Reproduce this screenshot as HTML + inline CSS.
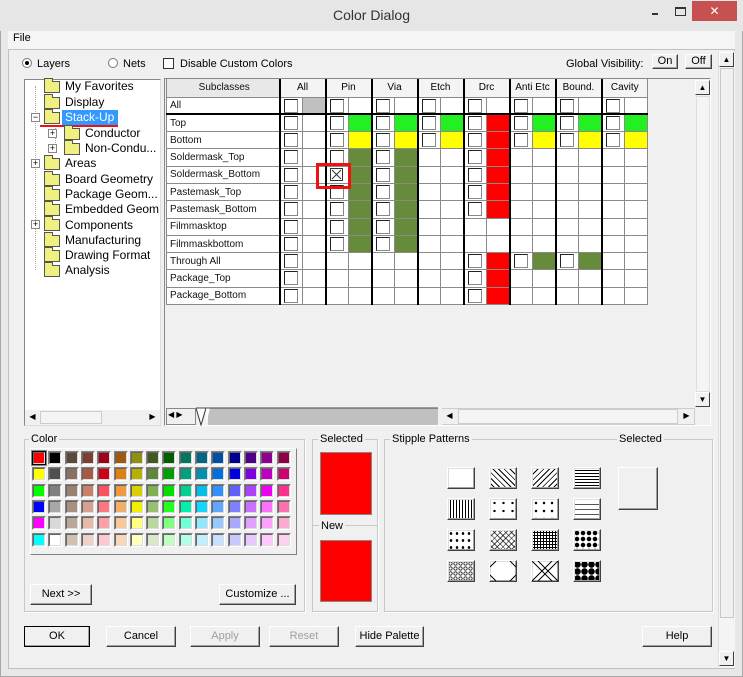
<!DOCTYPE html>
<html><head><meta charset="utf-8"><style>
*{box-sizing:border-box;margin:0;padding:0}
body{width:743px;height:677px;background:#f0f0f0;font-family:"Liberation Sans",sans-serif;font-size:11px;color:#000;position:relative;overflow:hidden}
.a{position:absolute}
.btn{position:absolute;background:#f0f0f0;border:1px solid;border-color:#fff #404040 #404040 #fff;box-shadow:inset -1px -1px 0 #a0a0a0;text-align:center;font-size:11px}
.grp{position:absolute;border:1px solid #c8c8c8;box-shadow:1px 1px 0 #fff}
.lbl{position:absolute;background:#f0f0f0;padding:0 2px;top:-7px;font-size:11px;line-height:12px}
table{border-collapse:collapse;position:absolute;left:166px;top:79px;table-layout:fixed;background:#fff}
td{border:1px solid #8a8a8a;height:17.3px;width:23px;padding:0;position:relative;font-size:10px}
td.n{width:113px;padding-left:3px;color:#111}
tr.h td{background:#f4f4f4;text-align:center;height:18px;font-size:10px;border-top:none}
tr.h td.n{background:#e8e8e8}
td.c::after{content:"";position:absolute;left:3px;top:1px;width:12px;height:12px;border:1px solid #222;border-right-color:#888;border-bottom-color:#888;background:#fff}
td.g{background:#22f022}td.y{background:#ffff00}td.o{background:#668b3a}td.r{background:#ff0000}td.q{background:#c0c0c0}
.k{border-left:2px solid #000!important}
tr.t td{border-bottom:2px solid #000}
.sw{position:absolute;width:14px;height:14px;border:1px solid;border-color:#808080 #fff #fff #808080}
.sw i{display:block;width:12px;height:12px;border:1px solid #666;border-right-color:#ddd;border-bottom-color:#ddd}
.tr{position:absolute;font-size:12px;line-height:14px;white-space:nowrap}
.fd{position:absolute;width:16px;height:12px;background:#f0f080;border:1px solid #555}
.fd::before{content:"";position:absolute;left:-1px;top:-4px;width:7px;height:3px;background:#f0f080;border:1px solid #555;border-bottom:none}
.pl{position:absolute;width:9px;height:9px;border:1px solid #888;background:#fff;font-size:9px;line-height:7px;text-align:center}
.st{position:absolute;width:28px;height:22px;background:#fff;border:1px solid;border-color:#fff #404040 #404040 #fff;box-shadow:inset -1px -1px 0 #a0a0a0,inset 1px 1px 0 #ddd}
.ar{position:absolute;width:15px;height:15px;background:#f0f0f0;border:1px solid;border-color:#fff #404040 #404040 #fff;font-size:8px;text-align:center;line-height:13px}
</style></head><body>
<div class="a" style="left:0;top:0;width:743px;height:677px;border:1px solid #a8a8a8;background:#e8e8e8"></div>
<div class="a" style="left:0;top:0;width:743px;height:31px;background:#e6e6e6"></div>
<div class="a" style="left:0;top:7px;width:743px;text-align:center;font-size:14px;color:#333">Color Dialog</div>
<div class="a" style="left:652px;top:8px;width:6px;height:2px;background:#333;top:13px"></div>
<div class="a" style="left:675px;top:7px;width:11px;height:9px;border:1px solid #333;border-top-width:2px"></div>
<div class="a" style="left:692px;top:1px;width:45px;height:20px;background:#c75050;color:#fff;text-align:center;font-size:12px;line-height:20px">✕</div>
<div class="a" style="left:8px;top:31px;width:727px;height:18px;background:#f5f5f5"></div>
<div class="a" style="left:13px;top:32px;font-size:11px">File</div>
<div class="a" style="left:8px;top:49px;width:727px;height:620px;background:#f0f0f0;border:1px solid #c0c0c0"></div>
<div class="a" style="left:718px;top:51px;width:17px;height:617px;background:#f4f4f4;border-left:1px solid #ddd"></div>
<div class="ar" style="left:719px;top:52px">▲</div>
<div class="a" style="left:720px;top:68px;width:14px;height:550px;background:#f0f0f0;border:1px solid #c8c8c8"></div>
<div class="ar" style="left:719px;top:651px">▼</div>
<div class="a" style="left:22px;top:58px;width:10px;height:10px;border-radius:50%;border:1px solid #777;background:#fff"><div class="a" style="left:2px;top:2px;width:4px;height:4px;border-radius:50%;background:#000"></div></div>
<div class="a" style="left:37px;top:58px">Layers</div>
<div class="a" style="left:108px;top:58px;width:10px;height:10px;border-radius:50%;border:1px solid #777;background:#fff"></div>
<div class="a" style="left:123px;top:58px">Nets</div>
<div class="a" style="left:163px;top:58px;width:11px;height:11px;border:1px solid #333;background:#fff"></div>
<div class="a" style="left:180px;top:58px">Disable Custom Colors</div>
<div class="a" style="left:566px;top:58px">Global Visibility:</div>
<div class="btn" style="left:652px;top:54px;width:26px;height:15px;line-height:12px">On</div>
<div class="btn" style="left:685px;top:54px;width:27px;height:15px;line-height:12px">Off</div>
<div class="a" style="left:24px;top:79px;width:137px;height:347px;background:#fff;border:1px solid #888;border-right-color:#ddd;border-bottom-color:#ddd"></div>
<div class="a" style="left:35px;top:86px;width:0;height:184px;border-left:1px dotted #aaa"></div>
<div class="a" style="left:55px;top:125px;width:0;height:24px;border-left:1px dotted #aaa"></div>
<div class="fd" style="left:44px;top:81px"></div><div class="tr" style="left:65px;top:79px">My Favorites</div>
<div class="fd" style="left:44px;top:97px"></div><div class="tr" style="left:65px;top:95px">Display</div>
<div class="pl" style="left:31px;top:113px">−</div><div class="fd" style="left:44px;top:112px"></div>
<div class="a" style="left:62px;top:110px;width:56px;height:15px;background:#3399ff"></div><div class="tr" style="left:65px;top:110px;color:#fff">Stack-Up</div>
<div class="a" style="left:40px;top:125px;width:78px;height:2px;background:#ee1111"></div>
<div class="pl" style="left:48px;top:129px">+</div><div class="fd" style="left:64px;top:128px"></div><div class="tr" style="left:85px;top:126px">Conductor</div>
<div class="pl" style="left:48px;top:144px">+</div><div class="fd" style="left:64px;top:143px"></div><div class="tr" style="left:85px;top:141px">Non-Condu...</div>
<div class="pl" style="left:31px;top:159px">+</div><div class="fd" style="left:44px;top:158px"></div><div class="tr" style="left:65px;top:156px">Areas</div>
<div class="fd" style="left:44px;top:174px"></div><div class="tr" style="left:65px;top:172px">Board Geometry</div>
<div class="fd" style="left:44px;top:189px"></div><div class="tr" style="left:65px;top:187px">Package Geom...</div>
<div class="fd" style="left:44px;top:204px"></div><div class="tr" style="left:65px;top:202px">Embedded Geom</div>
<div class="pl" style="left:31px;top:220px">+</div><div class="fd" style="left:44px;top:219px"></div><div class="tr" style="left:65px;top:218px">Components</div>
<div class="fd" style="left:44px;top:235px"></div><div class="tr" style="left:65px;top:233px">Manufacturing</div>
<div class="fd" style="left:44px;top:250px"></div><div class="tr" style="left:65px;top:248px">Drawing Format</div>
<div class="fd" style="left:44px;top:265px"></div><div class="tr" style="left:65px;top:263px">Analysis</div>
<div class="a" style="left:25px;top:410px;width:135px;height:15px;background:#f0f0f0"></div>
<div class="ar" style="left:25px;top:410px;border:none">◀</div><div class="a" style="left:40px;top:411px;width:62px;height:13px;border:1px solid #ccc;background:#f4f4f4"></div><div class="ar" style="left:145px;top:410px;border:none">▶</div>
<div class="a" style="left:164px;top:78px;width:547px;height:348px;background:#f0f0f0;border:1px solid #888;border-right-color:#fff;border-bottom-color:#fff"></div>
<table>
<tr class="h"><td class="n" style="text-align:center">Subclasses</td><td colspan="2" class="k">All</td><td colspan="2" class="k">Pin</td><td colspan="2" class="k">Via</td><td colspan="2" class="k">Etch</td><td colspan="2" class="k">Drc</td><td colspan="2" class="k">Anti Etc</td><td colspan="2" class="k">Bound.</td><td colspan="2" class="k">Cavity</td></tr>
<tr class="t"><td class="n">All</td><td class="c k"></td><td class="q"></td><td class="c k"></td><td></td><td class="c k"></td><td></td><td class="c k"></td><td></td><td class="c k"></td><td></td><td class="c k"></td><td></td><td class="c k"></td><td></td><td class="c k"></td><td></td></tr>
<tr><td class="n">Top</td><td class="c k"></td><td></td><td class="c k"></td><td class="g"></td><td class="c k"></td><td class="g"></td><td class="c k"></td><td class="g"></td><td class="c k"></td><td class="r"></td><td class="c k"></td><td class="g"></td><td class="c k"></td><td class="g"></td><td class="c k"></td><td class="g"></td></tr>
<tr><td class="n">Bottom</td><td class="c k"></td><td></td><td class="c k"></td><td class="y"></td><td class="c k"></td><td class="y"></td><td class="c k"></td><td class="y"></td><td class="c k"></td><td class="r"></td><td class="c k"></td><td class="y"></td><td class="c k"></td><td class="y"></td><td class="c k"></td><td class="y"></td></tr>
<tr><td class="n">Soldermask_Top</td><td class="c k"></td><td></td><td class="c k"></td><td class="o"></td><td class="c k"></td><td class="o"></td><td class="k"></td><td></td><td class="c k"></td><td class="r"></td><td class="k"></td><td></td><td class="k"></td><td></td><td class="k"></td><td></td></tr>
<tr><td class="n">Soldermask_Bottom</td><td class="c k"></td><td></td><td class="k"><svg class="a" style="left:3px;top:1px" width="13" height="13"><rect x=".5" y=".5" width="12" height="12" fill="#fff" stroke="#333"/><path d="M2 2L11 11M11 2L2 11" stroke="#333"/></svg></td><td class="o"></td><td class="c k"></td><td class="o"></td><td class="k"></td><td></td><td class="c k"></td><td class="r"></td><td class="k"></td><td></td><td class="k"></td><td></td><td class="k"></td><td></td></tr>
<tr><td class="n">Pastemask_Top</td><td class="c k"></td><td></td><td class="c k"></td><td class="o"></td><td class="c k"></td><td class="o"></td><td class="k"></td><td></td><td class="c k"></td><td class="r"></td><td class="k"></td><td></td><td class="k"></td><td></td><td class="k"></td><td></td></tr>
<tr><td class="n">Pastemask_Bottom</td><td class="c k"></td><td></td><td class="c k"></td><td class="o"></td><td class="c k"></td><td class="o"></td><td class="k"></td><td></td><td class="c k"></td><td class="r"></td><td class="k"></td><td></td><td class="k"></td><td></td><td class="k"></td><td></td></tr>
<tr><td class="n">Filmmasktop</td><td class="c k"></td><td></td><td class="c k"></td><td class="o"></td><td class="c k"></td><td class="o"></td><td class="k"></td><td></td><td class="k"></td><td></td><td class="k"></td><td></td><td class="k"></td><td></td><td class="k"></td><td></td></tr>
<tr><td class="n">Filmmaskbottom</td><td class="c k"></td><td></td><td class="c k"></td><td class="o"></td><td class="c k"></td><td class="o"></td><td class="k"></td><td></td><td class="k"></td><td></td><td class="k"></td><td></td><td class="k"></td><td></td><td class="k"></td><td></td></tr>
<tr><td class="n">Through All</td><td class="c k"></td><td></td><td class="k"></td><td></td><td class="k"></td><td></td><td class="k"></td><td></td><td class="c k"></td><td class="r"></td><td class="c k"></td><td class="o"></td><td class="c k"></td><td class="o"></td><td class="k"></td><td></td></tr>
<tr><td class="n">Package_Top</td><td class="c k"></td><td></td><td class="k"></td><td></td><td class="k"></td><td></td><td class="k"></td><td></td><td class="c k"></td><td class="r"></td><td class="k"></td><td></td><td class="k"></td><td></td><td class="k"></td><td></td></tr>
<tr><td class="n">Package_Bottom</td><td class="c k"></td><td></td><td class="k"></td><td></td><td class="k"></td><td></td><td class="k"></td><td></td><td class="c k"></td><td class="r"></td><td class="k"></td><td></td><td class="k"></td><td></td><td class="k"></td><td></td></tr>
</table>
<div class="a" style="left:316px;top:163px;width:35px;height:26px;border:3px solid #ee1111"></div>
<div class="ar" style="left:695px;top:80px">▲</div>
<div class="a" style="left:696px;top:96px;width:14px;height:296px;background:#f4f4f4;border:1px solid #ddd"></div>
<div class="ar" style="left:695px;top:392px">▼</div>
<div class="a" style="left:166px;top:408px;width:30px;height:17px;background:#f0f0f0;border:1px solid #888"></div>
<div class="a" style="left:168px;top:410px;font-size:8px">◀ ▶</div>
<svg class="a" style="left:196px;top:407px" width="245" height="19"><path d="M0 1L5 18L10 1Z" fill="#fff" stroke="#333"/><rect x="12" y="1" width="230" height="17" fill="#c0c0c0"/><path d="M10 1L14 1L10 18Z" fill="#fff"/><path d="M0 1H242" stroke="#444"/></svg>
<div class="a" style="left:442px;top:408px;width:253px;height:17px;background:#f0f0f0;border:1px solid #ccc"></div>
<div class="ar" style="left:442px;top:409px;border:none">◀</div><div class="a" style="left:458px;top:409px;width:220px;height:15px;border:1px solid #ccc;background:#f4f4f4"></div><div class="ar" style="left:679px;top:409px;border:none">▶</div>
<div class="grp" style="left:24px;top:439px;width:281px;height:173px"><div class="lbl" style="left:4px">Color</div></div>
<div class="a" style="left:30px;top:448px;width:267px;height:107px;border:1px solid;border-color:#fff #808080 #808080 #fff;background:#f0f0f0"></div>
<div id="pal"></div>
<div class="btn" style="left:30px;top:584px;width:62px;height:21px;line-height:19px">Next &gt;&gt;</div>
<div class="btn" style="left:219px;top:584px;width:77px;height:21px;line-height:19px">Customize ...</div>
<div class="grp" style="left:312px;top:439px;width:66px;height:173px"><div class="lbl" style="left:5px">Selected</div></div>
<div class="a" style="left:320px;top:452px;width:52px;height:63px;background:#ff0000;border:1px solid #888"></div>
<div class="a" style="left:313px;top:525px;width:64px;border-top:1px solid #c8c8c8"></div>
<div class="a" style="left:319px;top:520px;background:#f0f0f0;padding:0 2px">New</div>
<div class="a" style="left:320px;top:540px;width:52px;height:62px;background:#ff0000;border:1px solid #888"></div>
<div class="grp" style="left:384px;top:439px;width:329px;height:173px"><div class="lbl" style="left:5px">Stipple Patterns</div><div class="lbl" style="left:232px">Selected</div></div>
<div class="st" style="left:447px;top:467px"></div>
<div class="st" style="left:489px;top:467px;background:repeating-linear-gradient(45deg,#fff 0 3px,#000 3px 4px)"></div>
<div class="st" style="left:531px;top:467px;background:repeating-linear-gradient(-45deg,#fff 0 3px,#000 3px 4px)"></div>
<div class="st" style="left:573px;top:467px;background:repeating-linear-gradient(0deg,#fff 0 2px,#000 2px 3px)"></div>
<div class="st" style="left:447px;top:498px;background:repeating-linear-gradient(90deg,#fff 0 2px,#000 2px 3px)"></div>
<div class="st" style="left:489px;top:498px;background:radial-gradient(#000 1px,transparent 1.5px) 0 0/9px 8px,#fff"></div>
<div class="st" style="left:531px;top:498px;background:radial-gradient(#000 1px,transparent 1.5px) 0 0/8px 8px,#fff"></div>
<div class="st" style="left:573px;top:498px;background:repeating-linear-gradient(0deg,#fff 0 4px,#555 4px 5px)"></div>
<div class="st" style="left:447px;top:529px;background:radial-gradient(#000 1px,transparent 1.5px) 0 0/6px 7px,#fff"></div>
<div class="st" style="left:489px;top:529px;background:repeating-linear-gradient(45deg,#fff 0 3px,#555 3px 4px),repeating-linear-gradient(-45deg,#fff 0 3px,#555 3px 4px);background-blend-mode:multiply"></div>
<div class="st" style="left:531px;top:529px;background:repeating-linear-gradient(0deg,#fff 0 2px,#000 2px 3px),repeating-linear-gradient(90deg,#fff 0 2px,#000 2px 3px);background-blend-mode:multiply"></div>
<div class="st" style="left:573px;top:529px;background:radial-gradient(#000 2px,transparent 2.5px) 0 0/6px 6px,#fff"></div>
<div class="st" style="left:447px;top:560px;background:radial-gradient(circle,#fff 1px,#000 1.5px,#fff 2.5px) 0 0/5px 5px,#fff"></div>
<div class="st" style="left:489px;top:560px"><svg width="26" height="20"><path d="M0 6L6 0M20 0L26 6M0 14L6 20M20 20L26 14" stroke="#000"/></svg></div>
<div class="st" style="left:531px;top:560px"><svg width="26" height="20"><path d="M0 0L20 20M6 0L26 20M20 0L0 20M26 0L6 20" stroke="#000"/></svg></div>
<div class="st" style="left:573px;top:560px;background:radial-gradient(#000 3px,transparent 3.5px) 0 0/7px 7px,#fff"></div>
<div class="a" style="left:618px;top:467px;width:40px;height:43px;background:#f0f0f0;border:1px solid;border-color:#fff #404040 #404040 #fff;box-shadow:inset -1px -1px 0 #a0a0a0"></div>
<div class="btn" style="left:24px;top:626px;width:66px;height:21px;line-height:19px;border:1px solid #000">OK</div>
<div class="btn" style="left:106px;top:626px;width:70px;height:21px;line-height:19px">Cancel</div>
<div class="btn" style="left:190px;top:626px;width:70px;height:21px;line-height:19px;color:#a0a0a0">Apply</div>
<div class="btn" style="left:269px;top:626px;width:70px;height:21px;line-height:19px;color:#a0a0a0">Reset</div>
<div class="btn" style="left:355px;top:626px;width:69px;height:21px;line-height:19px">Hide Palette</div>
<div class="btn" style="left:642px;top:626px;width:70px;height:21px;line-height:19px">Help</div>
<script>
var c=["ff0000 000000 5a4a3a 7a4030 a00018 a05a10 909010 405a20 006000 007860 006880 0050a8 000090 500088 900090 900048","ffff00 505050 8a7060 a85a40 d00018 e08010 b8b000 608838 00a000 00a080 0090b0 0070e0 0000e0 8000e0 c000c0 d00070","00ff00 808080 9a8070 c88068 ff5060 f09a40 d8d000 80b050 00e000 00d090 00c0e8 3090ff 6060ff b040ff f000f0 ff3090","0000ff a8a8a8 a89080 d8a090 ff7880 f0b068 f0f000 98c070 20ff20 00f0b0 10d8ff 60a8ff 8080ff c870ff ff70ff ff70b0","ff00ff d8d8d8 b8a898 e8b8a8 ffa0a8 f8c898 ffff80 b8d8a0 80ff80 70ffd8 90e8ff 98c8ff a8a8ff e0a0ff ffa0ff ffa8d0","00ffff ffffff d0c0b0 f0d0c8 ffc8d0 f8d8b8 ffffc0 d8e8c8 c0ffc0 b0ffe8 c0f0ff c8e0ff c8c8ff e8c8ff ffc8ff ffd0f0"];
var h="";c.forEach(function(r,j){r.split(" ").forEach(function(v,i){h+='<div class="sw" style="left:'+(32+i*16.3)+'px;top:'+(451+j*16.3)+'px'+(i==0&&j==0?';border:1px solid #000;outline:1px solid #888':'')+'"><i style="background:#'+v+'"></i></div>';});});
document.getElementById("pal").innerHTML=h;
</script>
</body></html>
